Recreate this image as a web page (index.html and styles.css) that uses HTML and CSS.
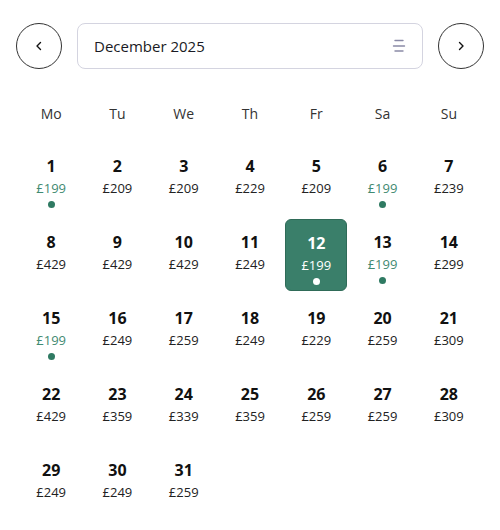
FILE: index.html
```html
<!DOCTYPE html>
<html>
<head>
<meta charset="utf-8">
<link rel="stylesheet" href="styles.css">
</head>
<body>
<div class="header">
  <button class="circle" aria-label="Previous month">
    <svg width="12" height="12" viewBox="0 0 12 12"><path d="M7.5 2.5 L4 6 L7.5 9.5" fill="none" stroke="#111" stroke-width="1.4" stroke-linecap="round" stroke-linejoin="round"/></svg>
  </button>
  <div class="select">
    <span class="month">December 2025</span>
    <svg class="filter" width="14" height="14" viewBox="0 0 14 14"><path d="M3 1.5 H11 M1.5 7 H12.5 M3 12 H11" stroke="#8a8aa6" stroke-width="1.4" stroke-linecap="round"/></svg>
  </div>
  <button class="circle" aria-label="Next month">
    <svg width="12" height="12" viewBox="0 0 12 12"><path d="M4.5 2.5 L8 6 L4.5 9.5" fill="none" stroke="#111" stroke-width="1.4" stroke-linecap="round" stroke-linejoin="round"/></svg>
  </button>
</div>
<div class="weekdays">
  <div>Mo</div><div>Tu</div><div>We</div><div>Th</div><div>Fr</div><div>Sa</div><div>Su</div>
</div>
<div class="grid">
  <div class="cell cheap"><span class="num">1</span><span class="price">£199</span><span class="dot"></span></div>
  <div class="cell"><span class="num">2</span><span class="price">£209</span></div>
  <div class="cell"><span class="num">3</span><span class="price">£209</span></div>
  <div class="cell"><span class="num">4</span><span class="price">£229</span></div>
  <div class="cell"><span class="num">5</span><span class="price">£209</span></div>
  <div class="cell cheap"><span class="num">6</span><span class="price">£199</span><span class="dot"></span></div>
  <div class="cell"><span class="num">7</span><span class="price">£239</span></div>

  <div class="cell"><span class="num">8</span><span class="price">£429</span></div>
  <div class="cell"><span class="num">9</span><span class="price">£429</span></div>
  <div class="cell"><span class="num">10</span><span class="price">£429</span></div>
  <div class="cell"><span class="num">11</span><span class="price">£249</span></div>
  <div class="cell cheap selected"><span class="num">12</span><span class="price">£199</span><span class="dot"></span></div>
  <div class="cell cheap"><span class="num">13</span><span class="price">£199</span><span class="dot"></span></div>
  <div class="cell"><span class="num">14</span><span class="price">£299</span></div>

  <div class="cell cheap"><span class="num">15</span><span class="price">£199</span><span class="dot"></span></div>
  <div class="cell"><span class="num">16</span><span class="price">£249</span></div>
  <div class="cell"><span class="num">17</span><span class="price">£259</span></div>
  <div class="cell"><span class="num">18</span><span class="price">£249</span></div>
  <div class="cell"><span class="num">19</span><span class="price">£229</span></div>
  <div class="cell"><span class="num">20</span><span class="price">£259</span></div>
  <div class="cell"><span class="num">21</span><span class="price">£309</span></div>

  <div class="cell"><span class="num">22</span><span class="price">£429</span></div>
  <div class="cell"><span class="num">23</span><span class="price">£359</span></div>
  <div class="cell"><span class="num">24</span><span class="price">£339</span></div>
  <div class="cell"><span class="num">25</span><span class="price">£359</span></div>
  <div class="cell"><span class="num">26</span><span class="price">£259</span></div>
  <div class="cell"><span class="num">27</span><span class="price">£259</span></div>
  <div class="cell"><span class="num">28</span><span class="price">£309</span></div>

  <div class="cell"><span class="num">29</span><span class="price">£249</span></div>
  <div class="cell"><span class="num">30</span><span class="price">£249</span></div>
  <div class="cell"><span class="num">31</span><span class="price">£259</span></div>
</div>
</body>
</html>
```
FILE: styles.css
```css
* { box-sizing: border-box; }
body {
  margin: 0;
  background: #fff;
  font-family: "Open Sans", "Noto Sans", sans-serif;
  color: #161616;
}
.header {
  display: flex;
  align-items: center;
  gap: 15px;
  padding: 23px 16px 0;
}
.circle {
  width: 46px;
  height: 46px;
  border-radius: 50%;
  border: 1px solid #333;
  background: #fff;
  display: flex;
  align-items: center;
  justify-content: center;
  padding: 0;
  flex: none;
}
.select {
  flex: 1;
  height: 46px;
  border: 1px solid #d4d4e0;
  border-radius: 8px;
  display: flex;
  align-items: center;
  justify-content: space-between;
  padding: 0 16px 0 16px;
}
.month {
  font-size: 15px;
  color: #1a1a24;
}
.filter { display: block; }
.weekdays {
  display: grid;
  grid-template-columns: repeat(7, 1fr);
  column-gap: 4px;
  padding: 0 20px;
  margin-top: 35px;
  height: 20px;
  line-height: 20px;
  font-size: 14px;
  text-align: center;
  color: #333;
}
.grid {
  display: grid;
  grid-template-columns: repeat(7, 1fr);
  gap: 4px;
  padding: 0 20px;
  margin-top: 19px;
}
.cell {
  height: 72px;
  border-radius: 6px;
  display: flex;
  flex-direction: column;
  align-items: center;
  padding-top: 12px;
}
.num {
  font-size: 16px;
  font-weight: 700;
  line-height: 22px;
  color: #111;
}
.price {
  font-size: 13px;
  line-height: 18px;
  margin-top: 2px;
  color: #222;
}
.dot {
  width: 7px;
  height: 7px;
  border-radius: 50%;
  background: #2f7a62;
  margin-top: 4px;
}
.cheap .price { color: #3f8a72; }
.selected {
  background: #3a7f6a;
  border: 1px solid #2f6b58;
}
.selected .num, .selected .price { color: #fff; }
.selected .dot { background: #fff; }
```
